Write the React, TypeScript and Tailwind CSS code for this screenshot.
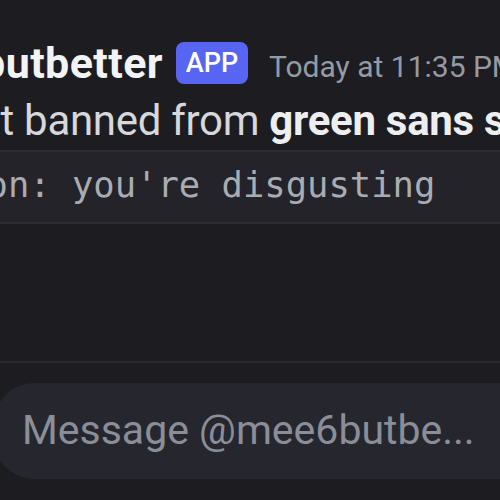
import React from "react";

export default function App() {
  const sans = { fontFamily: "Roboto, 'Noto Sans', sans-serif" } as React.CSSProperties;
  return (
    <div
      className="w-[500px] h-[500px] overflow-hidden bg-[#1c1c21] flex flex-col pt-[38px]"
      style={sans}
    >
      {/* header */}
      <div className="flex items-center h-[50px] whitespace-nowrap">
        <div className="flex justify-end overflow-hidden w-[163px] shrink-0">
          <span className="shrink-0 text-[43px] leading-[50px] font-bold tracking-[0.4px] text-[#f2f3f5]">
            mee6butbetter
          </span>
        </div>
        <div className="ml-[13px] h-[42px] w-[72px] shrink-0 rounded-[8px] bg-[#5865f2] flex items-center justify-center">
          <span className="text-[27px] font-medium leading-none text-white">APP</span>
        </div>
        <span className="ml-[21px] mt-[8px] shrink-0 text-[30px] leading-[50px] text-[#949ba4]">
          Today at 11:35 PM
        </span>
      </div>

      {/* message */}
      <div className="mt-[8px] flex items-start whitespace-pre text-[42px] leading-[50px] tracking-[-0.3px] text-[#d6d8dc]">
        <div className="flex justify-end overflow-hidden w-[14px] shrink-0">
          <span className="shrink-0">You got</span>
        </div>
        <span className="shrink-0"> banned from </span>
        <span className="shrink-0 font-bold text-[#eceef0]">green sans server</span>
      </div>

      {/* code block */}
      <div className="mt-[4px] -mx-[10px] border-y-2 border-[#2d2d34] bg-[#232329] pl-[10px] pt-[13px] pb-[17px]">
        <div
          className="flex items-start whitespace-pre text-[35.5px] leading-[40px] text-[#a9acb3]"
          style={{ fontFamily: "'DejaVu Sans Mono', 'Liberation Mono', monospace" }}
        >
          <div className="flex justify-end overflow-hidden w-[72px] shrink-0">
            <span className="shrink-0">Reason: </span>
          </div>
          <span className="shrink-0">you're disgusting</span>
        </div>
      </div>

      {/* separator */}
      <div className="mt-[137px] h-[2px] bg-[#29292f]" />

      {/* input */}
      <div className="mt-[20px] -ml-[6px] -mr-[20px] h-[96px] rounded-l-[40px] bg-[#26272e] flex items-center pl-[28px]">
        <span className="whitespace-nowrap text-[41px] tracking-[0px] text-[#8b8e98]">
          Message @mee6butbe...
        </span>
      </div>
    </div>
  );
}
